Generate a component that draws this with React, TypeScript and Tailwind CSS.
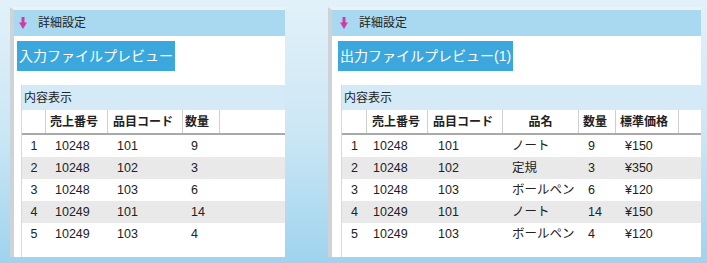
import React from "react";

type Col = { w: string; label: string; head: string; cell: string };

const leftCols: Col[] = [
  { w: "w-[24px]", label: "", head: "", cell: "justify-center" },
  { w: "w-[62px]", label: "売上番号", head: "pl-[4px]", cell: "pl-[9px]" },
  { w: "w-[75px]", label: "品目コード", head: "pl-[5px]", cell: "pl-[9px]" },
  { w: "w-[37px]", label: "数量", head: "pl-[2px]", cell: "pl-[8px]" },
];

const rightCols: Col[] = [
  { w: "w-[25px]", label: "", head: "", cell: "justify-center" },
  { w: "w-[61px]", label: "売上番号", head: "pl-[5px]", cell: "pl-[6px]" },
  { w: "w-[75px]", label: "品目コード", head: "pl-[5px]", cell: "pl-[10px]" },
  { w: "w-[76px]", label: "品名", head: "justify-center", cell: "pl-[9px]" },
  { w: "w-[37px]", label: "数量", head: "pl-[4px]", cell: "pl-[9px]" },
  { w: "w-[63px]", label: "標準価格", head: "pl-[4px]", cell: "pl-[9px]" },
];

const leftRows = [
  ["1", "10248", "101", "9"],
  ["2", "10248", "102", "3"],
  ["3", "10248", "103", "6"],
  ["4", "10249", "101", "14"],
  ["5", "10249", "103", "4"],
];

const rightRows = [
  ["1", "10248", "101", "ノート", "9", "¥150"],
  ["2", "10248", "102", "定規", "3", "¥350"],
  ["3", "10248", "103", "ボールペン", "6", "¥120"],
  ["4", "10249", "101", "ノート", "14", "¥150"],
  ["5", "10249", "103", "ボールペン", "4", "¥120"],
];

function Arrow() {
  return (
    <svg width="8" height="12" viewBox="0 0 8 12" className="shrink-0">
      <rect x="2.5" y="0" width="3" height="7" fill="#d23aa4" />
      <polygon points="0,5.5 8,5.5 4,12" fill="#d23aa4" />
    </svg>
  );
}

function Panel({
  width,
  indent,
  button,
  cols,
  rows,
}: {
  width: string;
  indent: boolean;
  button: string;
  cols: Col[];
  rows: string[][];
}) {
  return (
    <div
      className={
        "h-[250px] flex flex-col bg-white border-t-[3px] border-t-[#edf2f5] border-l-[4px] border-l-[#cdd3d7] " +
        width
      }
    >
      <div
        className={
          "h-[26px] shrink-0 bg-[#a9d9f0] flex items-center " +
          (indent ? "pl-[8px]" : "pl-[5px]")
        }
      >
        <Arrow />
        <span className="ml-[11px] text-[12px] text-[#222]">詳細設定</span>
      </div>
      <div
        className={
          "mt-[5px] h-[30px] w-fit px-[2px] bg-[#3ca7dc] text-white text-[14px] flex items-center " +
          (indent ? "ml-[6px]" : "ml-[3px]")
        }
      >
        {button}
      </div>
      <div
        className={
          "mt-[14px] flex-1 flex flex-col border-l border-l-[#d6dadd] " +
          (indent ? "ml-[9px]" : "ml-[7px]")
        }
      >
        <div className="h-[25px] shrink-0 bg-[#d4eaf6] flex items-center pl-[2px] text-[12px] text-[#222]">
          内容表示
        </div>
        <div className="h-[23px] shrink-0 flex bg-white">
          {cols.map((c, i) => (
            <div
              key={i}
              className={
                "h-full flex items-center border-r border-r-[#cfcfcf] font-bold text-[12px] text-[#222] " +
                c.w +
                " " +
                c.head
              }
            >
              {c.label}
            </div>
          ))}
          <div className="flex-1" />
        </div>
        <div className="h-[2px] shrink-0 bg-[#a9a9a9]" />
        {rows.map((r, ri) => (
          <div
            key={ri}
            className={
              "h-[22px] shrink-0 flex " +
              (ri % 2 === 1 ? "bg-[#e9e9e9]" : "bg-white")
            }
          >
            {r.map((v, ci) => (
              <div
                key={ci}
                className={
                  "h-full flex items-center text-[12.5px] text-[#222] " +
                  cols[ci].w +
                  " " +
                  cols[ci].cell
                }
              >
                {v}
              </div>
            ))}
            <div className="flex-1" />
          </div>
        ))}
      </div>
    </div>
  );
}

export default function App() {
  return (
    <div
      className="w-[707px] h-[263px] overflow-hidden flex items-start pt-[7px] pl-[10px] gap-[43px] bg-linear-to-b from-[#e2f1f9] via-[#cce7f5] to-[#9fd3ee]"
      style={{ fontFamily: '"Liberation Sans", "Noto Sans CJK JP", sans-serif' }}
    >
      <Panel
        width="w-[275px]"
        indent={false}
        button="入力ファイルプレビュー"
        cols={leftCols}
        rows={leftRows}
      />
      <Panel
        width="w-[373px]"
        indent={true}
        button="出力ファイルプレビュー(1)"
        cols={rightCols}
        rows={rightRows}
      />
    </div>
  );
}
